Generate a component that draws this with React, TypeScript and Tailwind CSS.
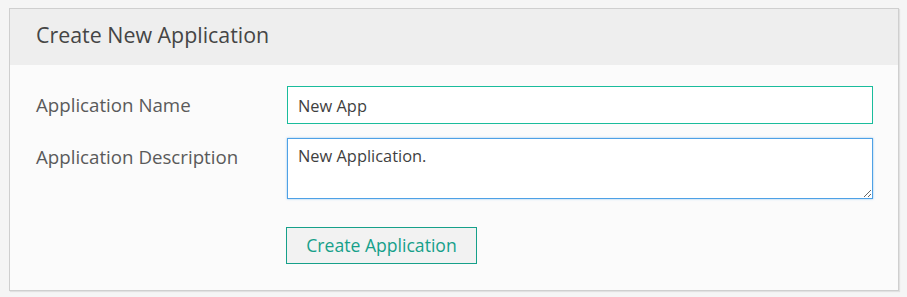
export default function App() {
  return (
    <div className="min-h-[297px] w-[907px] bg-[#f5f5f5] pt-2 pl-[9px] font-['Open_Sans','Lato',sans-serif] text-[#4a4a4a]">
      <div className="w-[890px] border border-[#cfcfcf] bg-[#fbfbfb] shadow-[1px_1px_1px_rgba(0,0,0,0.08)]">
        <div className="h-[56px] bg-[#eeeeee] px-[26px] flex items-center">
          <h2 className="-mt-[3px] text-[21.4px] text-[#454545]">Create New Application</h2>
        </div>
        <div className="pt-[21px] pb-[26px] pr-[25px]">
          <div className="flex items-center">
            <label className="w-[277px] pl-[26px] text-[18.7px] text-[#5a5a5a]">Application Name</label>
            <input
              defaultValue="New App"
              className="h-[38px] flex-1 border border-[#1abc9c] bg-white px-[10px] text-[16.4px] text-[#3f3f3f] outline-none"
            />
          </div>
          <div className="mt-[14px] flex items-start">
            <label className="w-[277px] pl-[26px] pt-[5px] text-[18.7px] text-[#5a5a5a]">Application Description</label>
            <textarea
              defaultValue="New Application."
              className="h-[61px] flex-1 border border-[#4ea1e6] bg-white px-[10px] pt-[5px] text-[16.4px] text-[#3f3f3f] outline-none shadow-[0_0_2px_rgba(78,161,230,0.6)]"
            />
          </div>
          <div className="mt-[28px] pl-[276px]">
            <button className="h-[37px] w-[191px] border border-[#16a08a] bg-[#f2f2f2] text-[17.6px] text-[#16a08a]">
              Create Application
            </button>
          </div>
        </div>
      </div>
    </div>
  )
}
